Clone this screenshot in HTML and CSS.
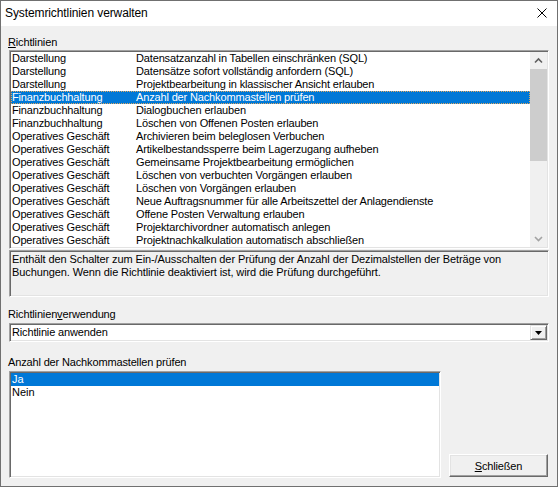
FILE: index.html
```html
<!DOCTYPE html>
<html>
<head>
<meta charset="utf-8">
<link rel="stylesheet" href="styles.css">
</head>
<body>
<div class="window">
  <div class="titlebar">
    <span class="title">Systemrichtlinien verwalten</span>
    <svg class="close" width="10" height="10" viewBox="0 0 10 10"><path d="M0.5 0.5 L9.5 9.5 M9.5 0.5 L0.5 9.5" stroke="#000" stroke-width="1" fill="none"/></svg>
  </div>
  <div class="content">
    <div class="label l1"><u>R</u>ichtlinien</div>
    <div class="listbox sunken">
      <div class="rows">
        <div class="row"><span>Darstellung</span><span>Datensatzanzahl in Tabellen einschränken (SQL)</span></div>
        <div class="row"><span>Darstellung</span><span>Datensätze sofort vollständig anfordern (SQL)</span></div>
        <div class="row"><span>Darstellung</span><span>Projektbearbeitung in klassischer Ansicht erlauben</span></div>
        <div class="row sel"><span>Finanzbuchhaltung</span><span>Anzahl der Nachkommastellen prüfen</span></div>
        <div class="row"><span>Finanzbuchhaltung</span><span>Dialogbuchen erlauben</span></div>
        <div class="row"><span>Finanzbuchhaltung</span><span>Löschen von Offenen Posten erlauben</span></div>
        <div class="row"><span>Operatives Geschäft</span><span>Archivieren beim beleglosen Verbuchen</span></div>
        <div class="row"><span>Operatives Geschäft</span><span>Artikelbestandssperre beim Lagerzugang aufheben</span></div>
        <div class="row"><span>Operatives Geschäft</span><span>Gemeinsame Projektbearbeitung ermöglichen</span></div>
        <div class="row"><span>Operatives Geschäft</span><span>Löschen von verbuchten Vorgängen erlauben</span></div>
        <div class="row"><span>Operatives Geschäft</span><span>Löschen von Vorgängen erlauben</span></div>
        <div class="row"><span>Operatives Geschäft</span><span>Neue Auftragsnummer für alle Arbeitszettel der Anlagendienste</span></div>
        <div class="row"><span>Operatives Geschäft</span><span>Offene Posten Verwaltung erlauben</span></div>
        <div class="row"><span>Operatives Geschäft</span><span>Projektarchivordner automatisch anlegen</span></div>
        <div class="row"><span>Operatives Geschäft</span><span>Projektnachkalkulation automatisch abschließen</span></div>
      </div>
      <div class="vscroll">
        <div class="arrow"><svg width="17" height="17" viewBox="0 0 17 17"><path d="M5 10.5 L8.5 7 L12 10.5" stroke="#606060" stroke-width="1.6" fill="none"/></svg></div>
        <div class="track"><div class="thumb"></div></div>
        <div class="arrow"><svg width="17" height="17" viewBox="0 0 17 17"><path d="M5 7 L8.5 10.5 L12 7" stroke="#a3a3a3" stroke-width="1.6" fill="none"/></svg></div>
      </div>
    </div>
    <div class="desc sunken">Enthält den Schalter zum Ein-/Ausschalten der Prüfung der Anzahl der Dezimalstellen der Beträge von<br>Buchungen. Wenn die Richtlinie deaktiviert ist, wird die Prüfung durchgeführt.</div>
    <div class="label l2">Richtlinien<u>v</u>erwendung</div>
    <div class="combo sunken">
      <span class="combo-text">Richtlinie anwenden</span>
      <span class="combo-btn"><svg width="7" height="4" viewBox="0 0 7 4"><polygon points="0,0 7,0 3.5,4" fill="#000"/></svg></span>
    </div>
    <div class="label l3">Anzahl der Nachkommastellen prüfen</div>
    <div class="bottom">
      <div class="valuelist sunken">
        <div class="vrow sel">Ja</div>
        <div class="vrow">Nein</div>
      </div>
      <button class="btn"><u>S</u>chließen</button>
    </div>
  </div>
</div>
</body>
</html>
```
FILE: styles.css
```css
html, body {
  margin: 0;
  padding: 0;
}
body {
  background: #fff;
  font-family: "Liberation Sans", Arial, sans-serif;
  font-size: 11px;
  color: #000;
}
.window {
  width: 558px;
  height: 487px;
  box-sizing: border-box;
  border: 1px solid #707070;
  background: #f0f0f0;
  display: flex;
  flex-direction: column;
}
.titlebar {
  height: 25px;
  flex: none;
  background: #fff;
  display: flex;
  padding-left: 4px;
}
.title {
  font-size: 12px;
  line-height: 25px;
  letter-spacing: -0.1px;
}
.close {
  margin-left: auto;
  margin-right: 10px;
  margin-top: 7px;
}
.content {
  flex: 1;
  display: flex;
  flex-direction: column;
  padding: 0 8px;
}
.label {
  height: 13px;
  line-height: 13px;
  margin-left: -1px;
  letter-spacing: -0.15px;
  white-space: nowrap;
}
.l1 { margin-top: 10px; }
.l2 { margin-top: 11px; }
.l3 { margin-top: 14px; }
.sunken {
  box-sizing: border-box;
  border: 1px solid;
  border-color: #a0a0a0 #ffffff #ffffff #a0a0a0;
  padding: 1px;
  box-shadow: inset 1px 1px 0 #696969, inset -1px -1px 0 #e3e3e3;
  background: #fff;
}
.listbox {
  margin-top: 1px;
  height: 199px;
  display: flex;
}
.rows {
  flex: 1;
  overflow: hidden;
}
.row {
  display: grid;
  grid-template-columns: 124px 1fr;
  height: 13px;
  line-height: 13px;
  padding-left: 1px;
  white-space: nowrap;
  letter-spacing: -0.15px;
}
.sel {
  background: #0078d7;
  color: #fff;
}
.row.sel {
  outline: 1px dotted #e0a860;
  outline-offset: -1px;
}
.vscroll {
  width: 17px;
  display: flex;
  flex-direction: column;
  background: #f0f0f0;
}
.arrow {
  height: 17px;
}
.arrow svg {
  display: block;
}
.track {
  flex: 1;
}
.thumb {
  height: 92px;
  background: #cdcdcd;
}
.desc {
  margin-top: 1px;
  height: 47px;
  background: #f0f0f0;
  padding: 2px 1px 1px 2px;
  line-height: 13px;
  letter-spacing: -0.1px;
  white-space: nowrap;
}
.combo {
  margin-top: 2px;
  height: 19px;
  display: flex;
}
.combo-text {
  flex: 1;
  line-height: 15px;
  padding-left: 1px;
  letter-spacing: -0.15px;
}
.combo-btn {
  width: 17px;
  height: 15px;
  box-sizing: border-box;
  border: 1px solid;
  border-color: #e3e3e3 #696969 #696969 #e3e3e3;
  box-shadow: inset 1px 1px 0 #fff, inset -1px -1px 0 #a0a0a0;
  background: #f0f0f0;
  display: flex;
  align-items: center;
  justify-content: center;
}
.combo-btn svg {
  display: block;
}
.bottom {
  margin-top: 2px;
  height: 107px;
  display: flex;
}
.valuelist {
  width: 432px;
  height: 107px;
}
.vrow {
  height: 13px;
  line-height: 13px;
  padding-left: 1px;
}
.btn {
  width: 99px;
  height: 23px;
  margin-left: auto;
  margin-right: 1px;
  margin-bottom: 1px;
  align-self: flex-end;
  font: inherit;
  letter-spacing: -0.15px;
  color: #000;
  padding: 0;
  background: #f0f0f0;
  box-sizing: border-box;
  border: 1px solid;
  border-color: #ffffff #696969 #696969 #ffffff;
  box-shadow: inset -1px -1px 0 #a0a0a0, inset 1px 1px 0 #e3e3e3;
}
```
